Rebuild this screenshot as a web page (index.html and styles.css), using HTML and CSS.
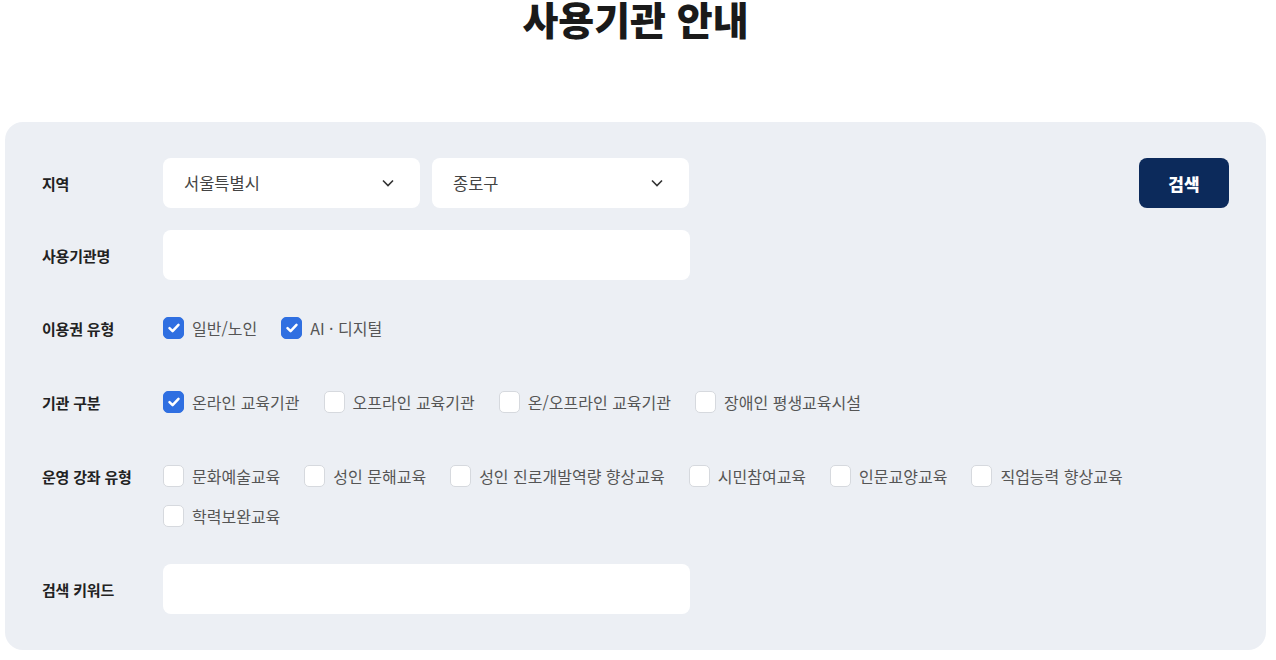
FILE: index.html
```html
<!DOCTYPE html>
<html lang="ko">
<head>
  <meta charset="UTF-8" />
  <meta name="viewport" content="width=device-width, initial-scale=1.0"/>
  <title>사용기관 안내</title>
  <link rel="stylesheet" href="styles.css">
</head>
<body>
  <div class="page">
    <h1 class="page-title">사용기관 안내</h1>

    <form class="search-box">
      <!-- 지역 -->
      <div class="row">
        <div class="row-label">지역</div>
        <div class="row-field">
          <div class="select">
            <span>서울특별시</span>
            <svg class="chevron" width="12" height="8" viewBox="0 0 12 8"><polyline points="1,1.5 6,6.5 11,1.5" fill="none" stroke="#333" stroke-width="1.6"/></svg>
          </div>
          <div class="select">
            <span>종로구</span>
            <svg class="chevron" width="12" height="8" viewBox="0 0 12 8"><polyline points="1,1.5 6,6.5 11,1.5" fill="none" stroke="#333" stroke-width="1.6"/></svg>
          </div>
          <button type="button" class="btn-search">검색</button>
        </div>
      </div>

      <div class="row">
        <div class="row-label">사용기관명</div>
        <div class="row-field">
          <input type="text" class="text-input">
        </div>
      </div>

      <div class="row row-check">
        <div class="row-label">이용권 유형</div>
        <div class="check-group">
          <label class="check"><span class="box checked"><svg width="14" height="14" viewBox="0 0 14 14"><polyline points="2.5,7.2 5.6,10.2 11.5,3.8" fill="none" stroke="#fff" stroke-width="2.5" stroke-linecap="round" stroke-linejoin="round"/></svg></span>일반/노인</label>
          <label class="check"><span class="box checked"><svg width="14" height="14" viewBox="0 0 14 14"><polyline points="2.5,7.2 5.6,10.2 11.5,3.8" fill="none" stroke="#fff" stroke-width="2.5" stroke-linecap="round" stroke-linejoin="round"/></svg></span>AI · 디지털</label>
        </div>
      </div>

      <div class="row row-check">
        <div class="row-label">기관 구분</div>
        <div class="check-group">
          <label class="check"><span class="box checked"><svg width="14" height="14" viewBox="0 0 14 14"><polyline points="2.5,7.2 5.6,10.2 11.5,3.8" fill="none" stroke="#fff" stroke-width="2.5" stroke-linecap="round" stroke-linejoin="round"/></svg></span>온라인 교육기관</label>
          <label class="check"><span class="box"></span>오프라인 교육기관</label>
          <label class="check"><span class="box"></span>온/오프라인 교육기관</label>
          <label class="check"><span class="box"></span>장애인 평생교육시설</label>
        </div>
      </div>

      <div class="row row-check">
        <div class="row-label">운영 강좌 유형</div>
        <div class="check-group">
          <label class="check"><span class="box"></span>문화예술교육</label>
          <label class="check"><span class="box"></span>성인 문해교육</label>
          <label class="check"><span class="box"></span>성인 진로개발역량 향상교육</label>
          <label class="check"><span class="box"></span>시민참여교육</label>
          <label class="check"><span class="box"></span>인문교양교육</label>
          <label class="check"><span class="box"></span>직업능력 향상교육</label>
          <label class="check"><span class="box"></span>학력보완교육</label>
        </div>
      </div>

      <div class="row">
        <div class="row-label">검색 키워드</div>
        <div class="row-field">
          <input type="text" class="text-input">
        </div>
      </div>
    </form>
  </div>
</body>
</html>
```

FILE: styles.css
```css
* {
  box-sizing: border-box;
}

body {
  margin: 0;
  padding: 0;
  font-family: "Noto Sans CJK KR", "Noto Sans", sans-serif;
  background: #fff;
  color: #222;
}

.page {
  width: 1261px;
  margin-left: 5px;
}

.page-title {
  margin: 0 0 86px;
  font-size: 39px;
  line-height: 36px;
  font-weight: 900;
  text-align: center;
  color: #1a1a1a;
}

.search-box {
  background: #eceff4;
  border-radius: 18px;
  padding: 36px 37px 36px 37px;
  display: flex;
  flex-direction: column;
  gap: 22px;
}

.row {
  display: grid;
  grid-template-columns: 121px 1fr;
  align-items: start;
}

.row-label {
  height: 50px;
  display: flex;
  align-items: center;
  font-size: 15px;
  font-weight: 700;
  color: #222;
  letter-spacing: -0.2px;
}

.row-check .row-label {
  height: 52px;
}

.row-field {
  display: flex;
  align-items: center;
  gap: 12px;
}

.select {
  width: 257px;
  height: 50px;
  background: #fff;
  border-radius: 8px;
  padding: 0 26px 0 21px;
  display: flex;
  align-items: center;
  justify-content: space-between;
  font-size: 16.5px;
  color: #444;
}

.text-input {
  width: 527px;
  height: 50px;
  border: 0;
  border-radius: 8px;
  background: #fff;
  outline: none;
}

.btn-search {
  margin-left: auto;
  width: 90px;
  height: 50px;
  border: 0;
  border-radius: 8px;
  background: #0c2a5b;
  color: #fff;
  font-family: inherit;
  font-size: 17px;
  font-weight: 900;
}

.check-group {
  display: flex;
  flex-wrap: wrap;
  column-gap: 24px;
  row-gap: 18px;
  padding: 15px 0;
}

.check {
  display: flex;
  align-items: center;
  gap: 8px;
  height: 22px;
  font-size: 16px;
  color: #555;
}

.box {
  width: 21px;
  height: 22px;
  border: 1px solid #d6d9de;
  border-radius: 5px;
  background: #fff;
  display: flex;
  align-items: center;
  justify-content: center;
}

.box.checked {
  background: #2f6fe1;
  border-color: #2f6fe1;
}
```
